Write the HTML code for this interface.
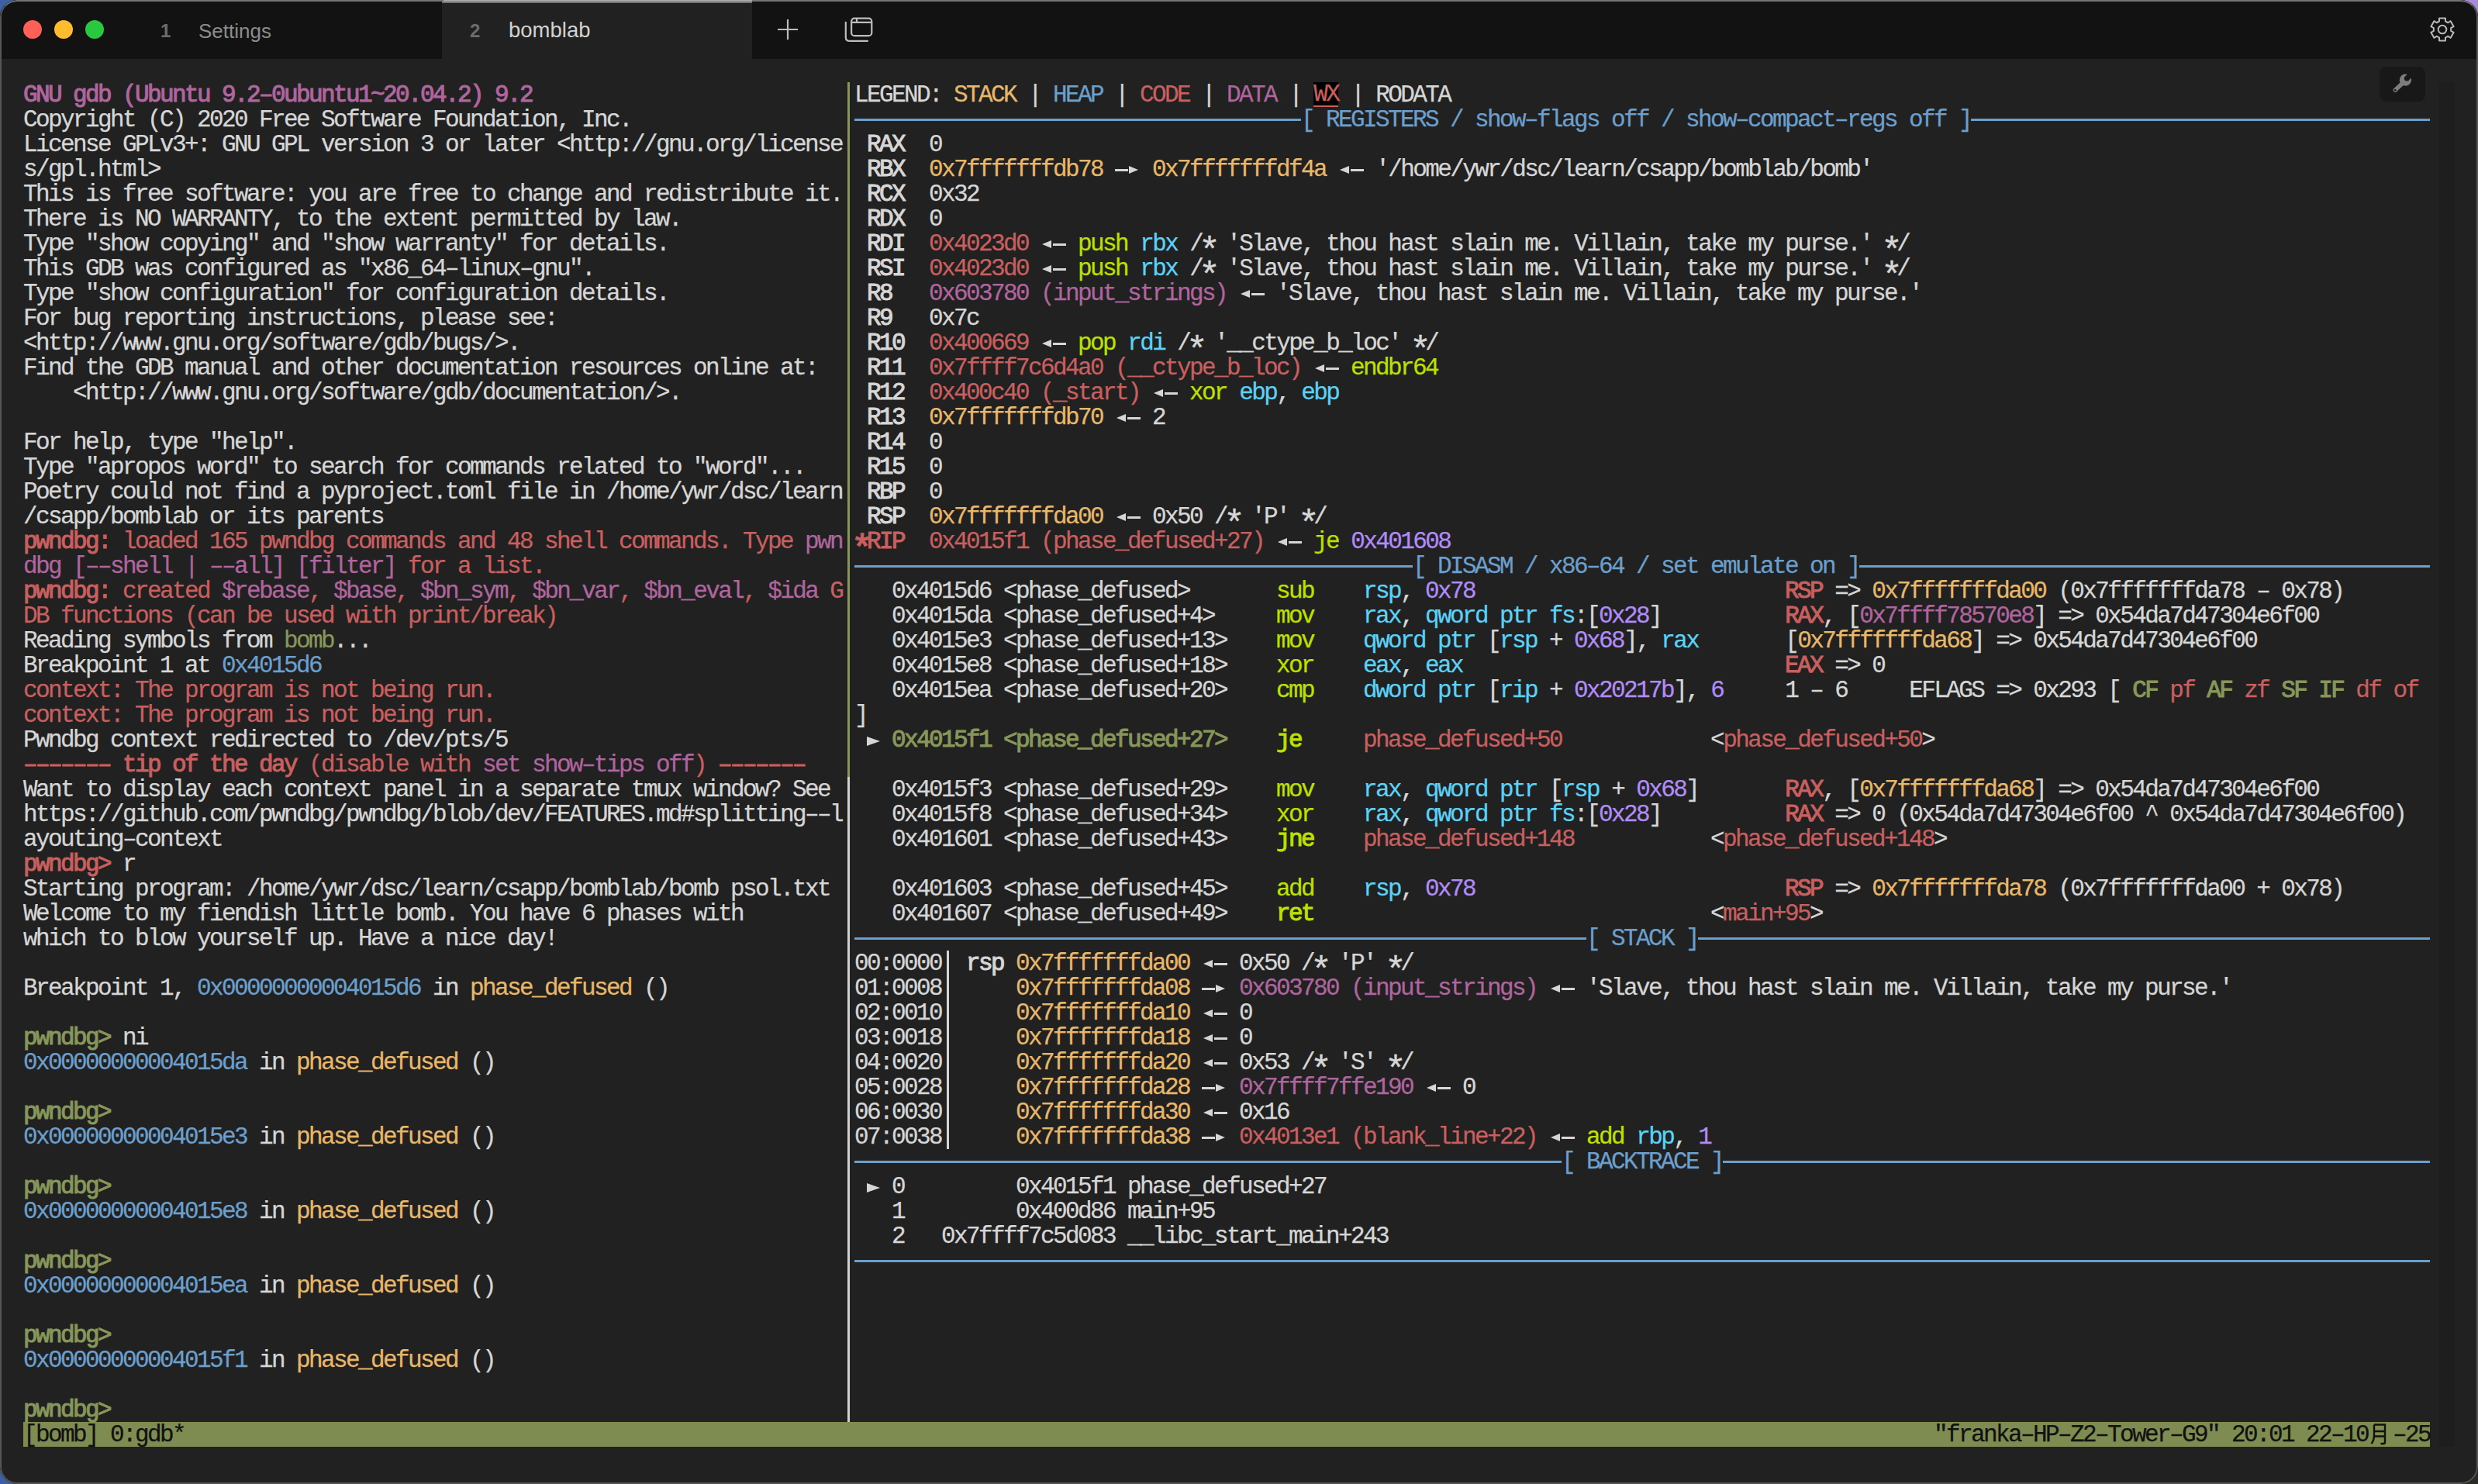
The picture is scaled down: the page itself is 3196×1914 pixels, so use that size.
<!DOCTYPE html>
<html><head><meta charset="utf-8"><style>
html,body{margin:0;padding:0;width:3196px;height:1914px;overflow:hidden;background:#3d5fa3;}
#ctr{position:absolute;right:0;top:0;width:40px;height:40px;background:#a98ad8}
#cbr{position:absolute;right:0;bottom:0;width:40px;height:40px;background:#2a2a26}
#win{position:absolute;left:0;top:0;width:3196px;height:1914px;border-radius:22px;background:#212121;overflow:hidden;}
#frame{position:absolute;left:0;top:0;width:3196px;height:1914px;box-sizing:border-box;border:2px solid #565656;border-top-color:#747474;border-radius:22px;}
#tb{position:absolute;left:0;top:0;width:3196px;height:76px;background:#121212;}
.ln{position:absolute;white-space:pre;font-family:"Liberation Mono",monospace;font-size:31px;letter-spacing:-2.603px;line-height:32px;height:32px;color:#d6d6d6;-webkit-text-stroke-width:0.25px;}
.b,.bm,.br,.bg,.lb{-webkit-text-stroke-width:1.0px}
.bm{color:#b0659f}
.br{color:#c95f5f}
.bg{color:#87975a}
.bl{color:#6b9fcc}
.m{color:#b0659f}
.r{color:#c95f5f}
.g{color:#87975a}
.y{color:#e8b86a}
.l{color:#bde000}
.lb{color:#bde000}
.c{color:#5cd2f6}
.p{color:#b18cf6}
.wx{color:#c95f5f;background:#000;display:inline-block;height:32px;vertical-align:top;position:relative;top:-1px;box-shadow:inset 0 -2px #c95f5f;}
.hl{position:absolute;height:3px;background:#6b9fcc;}
.vl{position:absolute;width:3px;background:#d6d6d6;}
i.ra,i.la,i.tr{display:inline-block;width:32px;height:32px;vertical-align:top;position:relative;}
i.tr{width:16px}
i.ra::before{content:"";position:absolute;left:0;top:15px;width:17px;height:3px;background:#d6d6d6;}
i.ra::after{content:"";position:absolute;left:18px;top:11px;border-left:12px solid #d6d6d6;border-top:5.5px solid transparent;border-bottom:5.5px solid transparent;}
i.la::before{content:"";position:absolute;left:2px;top:11px;border-right:12px solid #d6d6d6;border-top:5.5px solid transparent;border-bottom:5.5px solid transparent;}
i.la::after{content:"";position:absolute;left:16px;top:15px;width:17px;height:3px;background:#d6d6d6;}
i.tr::before{content:"";position:absolute;left:0;top:11px;border-left:17px solid #d6d6d6;border-top:6px solid transparent;border-bottom:6px solid transparent;}
#tab2{position:absolute;left:570px;top:0;width:400px;height:76px;background:#212121;border-top:4px solid #727272;box-sizing:border-box;}
.dot{position:absolute;top:26px;width:24px;height:24px;border-radius:50%;}
.tnum{position:absolute;top:20px;font-family:"Liberation Sans",sans-serif;font-weight:bold;font-size:24px;line-height:40px;color:#6c6c6c;}
.tname{position:absolute;top:20px;font-family:"Liberation Sans",sans-serif;font-size:26px;line-height:40px;}
#wr{position:absolute;left:3069px;top:86px;width:59px;height:45px;border-radius:9px;background:#181818;}
#wr svg{position:absolute;left:0;top:0}
#sb{position:absolute;left:3146px;top:106px;width:20px;height:1760px;background:#1e1e1e;}
.pb{position:absolute;left:1093px;width:3px;}
#st{position:absolute;left:30px;top:1834px;width:3104px;height:32px;background:#7f8c51;}
.k{color:#111}
i.yue{display:inline-block;width:32px;height:32px;vertical-align:top;}
i.yue svg{display:block}

i.as{font-style:normal;display:inline-block;transform:translateY(11px) scale(1.5);}

</style></head><body>
<div id="ctr"></div><div id="cbr"></div>
<div id="win">
<div id="tb"></div>
<div id="tab2"></div>
<div class="dot" style="left:30px;background:#fe5f57"></div>
<div class="dot" style="left:70px;background:#febc2e"></div>
<div class="dot" style="left:110px;background:#28c840"></div>
<div class="tnum" style="left:207px">1</div>
<div class="tname" style="left:256px;color:#8c8c8c">Settings</div>
<div class="tnum" style="left:606px">2</div>
<div class="tname" style="left:656px;top:19px;font-size:27.5px;color:#d2d2d2">bomblab</div>
<svg style="position:absolute;left:1000px;top:22px" width="32" height="32" viewBox="0 0 32 32"><path d="M16 3V29M3 16H29" stroke="#bdbdbd" stroke-width="2.2" fill="none"/></svg>
<svg style="position:absolute;left:1086px;top:18px" width="44" height="40" viewBox="0 0 44 40"><rect x="12.1" y="5.7" width="26.2" height="22.5" rx="4" stroke="#bdbdbd" stroke-width="2.2" fill="none"/><path d="M12.1 10.8H38.3M19 5.7V10.8" stroke="#bdbdbd" stroke-width="2.2" fill="none"/><path d="M4.8 10.8V30.3Q4.8 34.8 9.3 34.8H33" stroke="#bdbdbd" stroke-width="2.2" fill="none" stroke-linecap="round"/></svg>
<svg style="position:absolute;left:3132px;top:20px" width="36" height="36" viewBox="-18 -18 36 36"><path id="gear" fill="none" stroke="#b8b8b8" stroke-width="2" stroke-linejoin="round" d="M-4.00 -10.46 L-4.00 -14.60 L4.00 -14.60 L4.00 -10.46 A11.20 11.20 0 0 1 7.06 -8.69 L10.64 -10.76 L14.64 -3.84 L11.06 -1.77 A11.20 11.20 0 0 1 11.06 1.77 L14.64 3.84 L10.64 10.76 L7.06 8.69 A11.20 11.20 0 0 1 4.00 10.46 L4.00 14.60 L-4.00 14.60 L-4.00 10.46 A11.20 11.20 0 0 1 -7.06 8.69 L-10.64 10.76 L-14.64 3.84 L-11.06 1.77 A11.20 11.20 0 0 1 -11.06 -1.77 L-14.64 -3.84 L-10.64 -10.76 L-7.06 -8.69 A11.20 11.20 0 0 1 -4.00 -10.46 Z"/><circle r="5.3" fill="none" stroke="#b8b8b8" stroke-width="2"/></svg>
<div id="wr"><svg width="59" height="45" viewBox="0 0 59 45"><defs><mask id="wm" maskUnits="userSpaceOnUse" x="0" y="0" width="59" height="45"><rect width="59" height="45" fill="#fff"/><circle cx="35.2" cy="15.2" r="3.3" fill="#000"/><path d="M35.2 15.2L45 5.4" stroke="#000" stroke-width="6.6"/><circle cx="20.2" cy="30.2" r="1.3" fill="#000"/></mask></defs><g mask="url(#wm)" fill="#7c7c7c"><circle cx="33.4" cy="17.2" r="7.6"/><path d="M20.2 30.2L31 20" stroke="#7c7c7c" stroke-width="5.4" stroke-linecap="round"/></g></svg></div>
<div id="sb"></div>
<div class="pb" style="top:106px;height:896px;background:#87975a"></div>
<div class="pb" style="top:1002px;height:832px;background:#d0d0d0"></div>
<div id="st"></div>

<div class="ln" style="top:107px;left:30px"><span class="bm">GNU gdb (Ubuntu 9.2–0ubuntu1~20.04.2) 9.2</span></div>
<div class="ln" style="top:139px;left:30px">Copyright (C) 2020 Free Software Foundation, Inc.</div>
<div class="ln" style="top:171px;left:30px">License GPLv3+: GNU GPL version 3 or later &lt;http://gnu.org/license</div>
<div class="ln" style="top:203px;left:30px">s/gpl.html&gt;</div>
<div class="ln" style="top:235px;left:30px">This is free software: you are free to change and redistribute it.</div>
<div class="ln" style="top:267px;left:30px">There is NO WARRANTY, to the extent permitted by law.</div>
<div class="ln" style="top:299px;left:30px">Type "show copying" and "show warranty" for details.</div>
<div class="ln" style="top:331px;left:30px">This GDB was configured as "x86_64–linux–gnu".</div>
<div class="ln" style="top:363px;left:30px">Type "show configuration" for configuration details.</div>
<div class="ln" style="top:395px;left:30px">For bug reporting instructions, please see:</div>
<div class="ln" style="top:427px;left:30px">&lt;http://www.gnu.org/software/gdb/bugs/&gt;.</div>
<div class="ln" style="top:459px;left:30px">Find the GDB manual and other documentation resources online at:</div>
<div class="ln" style="top:491px;left:30px">    &lt;http://www.gnu.org/software/gdb/documentation/&gt;.</div>
<div class="ln" style="top:555px;left:30px">For help, type "help".</div>
<div class="ln" style="top:587px;left:30px">Type "apropos word" to search for commands related to "word"...</div>
<div class="ln" style="top:619px;left:30px">Poetry could not find a pyproject.toml file in /home/ywr/dsc/learn</div>
<div class="ln" style="top:651px;left:30px">/csapp/bomblab or its parents</div>
<div class="ln" style="top:683px;left:30px"><span class="br">pwndbg:</span><span class="r"> loaded 165 pwndbg commands and 48 shell commands. Type </span><span class="m">pwn</span></div>
<div class="ln" style="top:715px;left:30px"><span class="m">dbg [––shell | ––all] [filter]</span><span class="r"> for a list.</span></div>
<div class="ln" style="top:747px;left:30px"><span class="br">pwndbg:</span><span class="r"> created </span><span class="m">$rebase</span><span class="r">, </span><span class="m">$base</span><span class="r">, </span><span class="m">$bn_sym</span><span class="r">, </span><span class="m">$bn_var</span><span class="r">, </span><span class="m">$bn_eval</span><span class="r">, </span><span class="m">$ida</span><span class="r"> G</span></div>
<div class="ln" style="top:779px;left:30px"><span class="r">DB functions (can be used with print/break)</span></div>
<div class="ln" style="top:811px;left:30px">Reading symbols from <span class="g">bomb</span>...</div>
<div class="ln" style="top:843px;left:30px">Breakpoint 1 at <span class="bl">0x4015d6</span></div>
<div class="ln" style="top:875px;left:30px"><span class="r">context: The program is not being run.</span></div>
<div class="ln" style="top:907px;left:30px"><span class="r">context: The program is not being run.</span></div>
<div class="ln" style="top:939px;left:30px">Pwndbg context redirected to /dev/pts/5</div>
<div class="ln" style="top:971px;left:30px"><span class="br">––––––– tip of the day</span><span class="r"> (disable with </span><span class="m">set show–tips off</span><span class="r">)</span><span class="br"> –––––––</span></div>
<div class="ln" style="top:1003px;left:30px">Want to display each context panel in a separate tmux window? See</div>
<div class="ln" style="top:1035px;left:30px">https://github.com/pwndbg/pwndbg/blob/dev/FEATURES.md#splitting––l</div>
<div class="ln" style="top:1067px;left:30px">ayouting–context</div>
<div class="ln" style="top:1099px;left:30px"><span class="br">pwndbg&gt;</span> r</div>
<div class="ln" style="top:1131px;left:30px">Starting program: /home/ywr/dsc/learn/csapp/bomblab/bomb psol.txt</div>
<div class="ln" style="top:1163px;left:30px">Welcome to my fiendish little bomb. You have 6 phases with</div>
<div class="ln" style="top:1195px;left:30px">which to blow yourself up. Have a nice day!</div>
<div class="ln" style="top:1259px;left:30px">Breakpoint 1, <span class="bl">0x00000000004015d6</span> in <span class="y">phase_defused</span> ()</div>
<div class="ln" style="top:1323px;left:30px"><span class="bg">pwndbg&gt;</span> ni</div>
<div class="ln" style="top:1355px;left:30px"><span class="bl">0x00000000004015da</span> in <span class="y">phase_defused</span> ()</div>
<div class="ln" style="top:1419px;left:30px"><span class="bg">pwndbg&gt;</span></div>
<div class="ln" style="top:1451px;left:30px"><span class="bl">0x00000000004015e3</span> in <span class="y">phase_defused</span> ()</div>
<div class="ln" style="top:1515px;left:30px"><span class="bg">pwndbg&gt;</span></div>
<div class="ln" style="top:1547px;left:30px"><span class="bl">0x00000000004015e8</span> in <span class="y">phase_defused</span> ()</div>
<div class="ln" style="top:1611px;left:30px"><span class="bg">pwndbg&gt;</span></div>
<div class="ln" style="top:1643px;left:30px"><span class="bl">0x00000000004015ea</span> in <span class="y">phase_defused</span> ()</div>
<div class="ln" style="top:1707px;left:30px"><span class="bg">pwndbg&gt;</span></div>
<div class="ln" style="top:1739px;left:30px"><span class="bl">0x00000000004015f1</span> in <span class="y">phase_defused</span> ()</div>
<div class="ln" style="top:1803px;left:30px"><span class="bg">pwndbg&gt;</span></div>
<div class="ln" style="top:107px;left:1102px">LEGEND: <span class="y">STACK</span> | <span class="bl">HEAP</span> | <span class="r">CODE</span> | <span class="m">DATA</span> | <span class="wx">WX</span> | RODATA</div>
<div class="ln" style="top:171px;left:1102px"> <span class="b">RAX</span>  0</div>
<div class="ln" style="top:203px;left:1102px"> <span class="b">RBX</span>  <span class="y">0x7fffffffdb78</span> <i class="ra"></i> <span class="y">0x7fffffffdf4a</span> <i class="la"></i> '/home/ywr/dsc/learn/csapp/bomblab/bomb'</div>
<div class="ln" style="top:235px;left:1102px"> <span class="b">RCX</span>  0x32</div>
<div class="ln" style="top:267px;left:1102px"> <span class="b">RDX</span>  0</div>
<div class="ln" style="top:299px;left:1102px"> <span class="b">RDI</span>  <span class="r">0x4023d0</span> <i class="la"></i> <span class="l">push</span> <span class="c">rbx</span> /<i class="as">*</i> 'Slave, thou hast slain me. Villain, take my purse.' <i class="as">*</i>/</div>
<div class="ln" style="top:331px;left:1102px"> <span class="b">RSI</span>  <span class="r">0x4023d0</span> <i class="la"></i> <span class="l">push</span> <span class="c">rbx</span> /<i class="as">*</i> 'Slave, thou hast slain me. Villain, take my purse.' <i class="as">*</i>/</div>
<div class="ln" style="top:363px;left:1102px"> <span class="b">R8</span>   <span class="m">0x603780 (input_strings)</span> <i class="la"></i> 'Slave, thou hast slain me. Villain, take my purse.'</div>
<div class="ln" style="top:395px;left:1102px"> <span class="b">R9</span>   0x7c</div>
<div class="ln" style="top:427px;left:1102px"> <span class="b">R10</span>  <span class="r">0x400669</span> <i class="la"></i> <span class="l">pop</span> <span class="c">rdi</span> /<i class="as">*</i> '__ctype_b_loc' <i class="as">*</i>/</div>
<div class="ln" style="top:459px;left:1102px"> <span class="b">R11</span>  <span class="r">0x7ffff7c6d4a0 (__ctype_b_loc)</span> <i class="la"></i> <span class="l">endbr64</span></div>
<div class="ln" style="top:491px;left:1102px"> <span class="b">R12</span>  <span class="r">0x400c40 (_start)</span> <i class="la"></i> <span class="l">xor</span> <span class="c">ebp</span>, <span class="c">ebp</span></div>
<div class="ln" style="top:523px;left:1102px"> <span class="b">R13</span>  <span class="y">0x7fffffffdb70</span> <i class="la"></i> 2</div>
<div class="ln" style="top:555px;left:1102px"> <span class="b">R14</span>  0</div>
<div class="ln" style="top:587px;left:1102px"> <span class="b">R15</span>  0</div>
<div class="ln" style="top:619px;left:1102px"> <span class="b">RBP</span>  0</div>
<div class="ln" style="top:651px;left:1102px"> <span class="b">RSP</span>  <span class="y">0x7fffffffda00</span> <i class="la"></i> 0x50 /<i class="as">*</i> 'P' <i class="as">*</i>/</div>
<div class="ln" style="top:683px;left:1102px"><span class="br"><i class="as">*</i>RIP</span>  <span class="r">0x4015f1 (phase_defused+27)</span> <i class="la"></i> <span class="l">je</span> <span class="p">0x401608</span></div>
<div class="ln" style="top:747px;left:1102px">   0x4015d6 &lt;phase_defused&gt;       <span class="l">sub</span>    <span class="c">rsp</span>, <span class="p">0x78</span>                         <span class="br">RSP</span> =&gt; <span class="y">0x7fffffffda00</span> (0x7fffffffda78 – 0x78)</div>
<div class="ln" style="top:779px;left:1102px">   0x4015da &lt;phase_defused+4&gt;     <span class="l">mov</span>    <span class="c">rax</span>, <span class="c">qword ptr fs</span>:[<span class="p">0x28</span>]          <span class="br">RAX</span>, [<span class="m">0x7ffff78570e8</span>] =&gt; 0x54da7d47304e6f00</div>
<div class="ln" style="top:811px;left:1102px">   0x4015e3 &lt;phase_defused+13&gt;    <span class="l">mov</span>    <span class="c">qword ptr</span> [<span class="c">rsp</span> + <span class="p">0x68</span>], <span class="c">rax</span>       [<span class="y">0x7fffffffda68</span>] =&gt; 0x54da7d47304e6f00</div>
<div class="ln" style="top:843px;left:1102px">   0x4015e8 &lt;phase_defused+18&gt;    <span class="l">xor</span>    <span class="c">eax</span>, <span class="c">eax</span>                          <span class="br">EAX</span> =&gt; 0</div>
<div class="ln" style="top:875px;left:1102px">   0x4015ea &lt;phase_defused+20&gt;    <span class="l">cmp</span>    <span class="c">dword ptr</span> [<span class="c">rip</span> + <span class="p">0x20217b</span>], <span class="p">6</span>     1 – 6     EFLAGS =&gt; 0x293 [ <span class="bg">CF</span> <span class="r">pf</span> <span class="bg">AF</span> <span class="r">zf</span> <span class="bg">SF</span> <span class="bg">IF</span> <span class="r">df</span> <span class="r">of</span></div>
<div class="ln" style="top:907px;left:1102px">]</div>
<div class="ln" style="top:939px;left:1102px"> <i class="tr"></i> <span class="bg">0x4015f1 &lt;phase_defused+27&gt;</span>    <span class="lb">je</span>     <span class="r">phase_defused+50</span>            &lt;<span class="r">phase_defused+50</span>&gt;</div>
<div class="ln" style="top:1003px;left:1102px">   0x4015f3 &lt;phase_defused+29&gt;    <span class="l">mov</span>    <span class="c">rax</span>, <span class="c">qword ptr</span> [<span class="c">rsp</span> + <span class="p">0x68</span>]       <span class="br">RAX</span>, [<span class="y">0x7fffffffda68</span>] =&gt; 0x54da7d47304e6f00</div>
<div class="ln" style="top:1035px;left:1102px">   0x4015f8 &lt;phase_defused+34&gt;    <span class="l">xor</span>    <span class="c">rax</span>, <span class="c">qword ptr fs</span>:[<span class="p">0x28</span>]          <span class="br">RAX</span> =&gt; 0 (0x54da7d47304e6f00 ^ 0x54da7d47304e6f00)</div>
<div class="ln" style="top:1067px;left:1102px">   0x401601 &lt;phase_defused+43&gt;    <span class="lb">jne</span>    <span class="r">phase_defused+148</span>           &lt;<span class="r">phase_defused+148</span>&gt;</div>
<div class="ln" style="top:1131px;left:1102px">   0x401603 &lt;phase_defused+45&gt;    <span class="l">add</span>    <span class="c">rsp</span>, <span class="p">0x78</span>                         <span class="br">RSP</span> =&gt; <span class="y">0x7fffffffda78</span> (0x7fffffffda00 + 0x78)</div>
<div class="ln" style="top:1163px;left:1102px">   0x401607 &lt;phase_defused+49&gt;    <span class="lb">ret</span>                                &lt;<span class="r">main+95</span>&gt;</div>
<div class="ln" style="top:1227px;left:1102px">00:0000  <span class="b">rsp</span> <span class="y">0x7fffffffda00</span> <i class="la"></i> 0x50 /<i class="as">*</i> 'P' <i class="as">*</i>/</div>
<div class="ln" style="top:1259px;left:1102px">01:0008      <span class="y">0x7fffffffda08</span> <i class="ra"></i> <span class="m">0x603780 (input_strings)</span> <i class="la"></i> 'Slave, thou hast slain me. Villain, take my purse.'</div>
<div class="ln" style="top:1291px;left:1102px">02:0010      <span class="y">0x7fffffffda10</span> <i class="la"></i> 0</div>
<div class="ln" style="top:1323px;left:1102px">03:0018      <span class="y">0x7fffffffda18</span> <i class="la"></i> 0</div>
<div class="ln" style="top:1355px;left:1102px">04:0020      <span class="y">0x7fffffffda20</span> <i class="la"></i> 0x53 /<i class="as">*</i> 'S' <i class="as">*</i>/</div>
<div class="ln" style="top:1387px;left:1102px">05:0028      <span class="y">0x7fffffffda28</span> <i class="ra"></i> <span class="m">0x7ffff7ffe190</span> <i class="la"></i> 0</div>
<div class="ln" style="top:1419px;left:1102px">06:0030      <span class="y">0x7fffffffda30</span> <i class="la"></i> 0x16</div>
<div class="ln" style="top:1451px;left:1102px">07:0038      <span class="y">0x7fffffffda38</span> <i class="ra"></i> <span class="r">0x4013e1 (blank_line+22)</span> <i class="la"></i> <span class="l">add</span> <span class="c">rbp</span>, <span class="p">1</span></div>
<div class="ln" style="top:1515px;left:1102px"> <i class="tr"></i> 0         0x4015f1 phase_defused+27</div>
<div class="ln" style="top:1547px;left:1102px">   1         0x400d86 main+95</div>
<div class="ln" style="top:1579px;left:1102px">   2   0x7ffff7c5d083 __libc_start_main+243</div>
<div class="hl" style="top:153px;left:1102px;width:576px"></div>
<div class="hl" style="top:153px;left:2542px;width:592px"></div>
<div class="ln" style="top:139px;left:1678px"><span class="bl">[ REGISTERS / show–flags off / show–compact–regs off ]</span></div>
<div class="hl" style="top:729px;left:1102px;width:720px"></div>
<div class="hl" style="top:729px;left:2398px;width:736px"></div>
<div class="ln" style="top:715px;left:1822px"><span class="bl">[ DISASM / x86–64 / set emulate on ]</span></div>
<div class="hl" style="top:1209px;left:1102px;width:944px"></div>
<div class="hl" style="top:1209px;left:2190px;width:944px"></div>
<div class="ln" style="top:1195px;left:2046px"><span class="bl">[ STACK ]</span></div>
<div class="hl" style="top:1497px;left:1102px;width:912px"></div>
<div class="hl" style="top:1497px;left:2222px;width:912px"></div>
<div class="ln" style="top:1483px;left:2014px"><span class="bl">[ BACKTRACE ]</span></div>
<div class="hl" style="top:1625px;left:1102px;width:2032px"></div>
<div class="vl" style="top:1226px;left:1221px;height:256px"></div>
<div class="ln" style="top:1835px;left:30px"><span class="k">[bomb] 0:gdb*</span></div>
<div class="ln" style="top:1835px;left:2494px"><span class="k">&quot;franka–HP–Z2–Tower–G9&quot; 20:01 22–10<i class="yue"><svg width="32" height="32" viewBox="0 0 32 32"><path d="M8 2.5H22V25Q22 27 20 27H16.5M8 2.5V16Q8 23 4.5 27M8 11H22M8 17.5H22" stroke="#111" stroke-width="2.4" fill="none"/></svg></i>–25</span></div>
<div id="frame"></div><div style="position:absolute;left:572px;top:0;width:398px;height:2px;background:#a8a8a8"></div>
</div>
</body></html>
